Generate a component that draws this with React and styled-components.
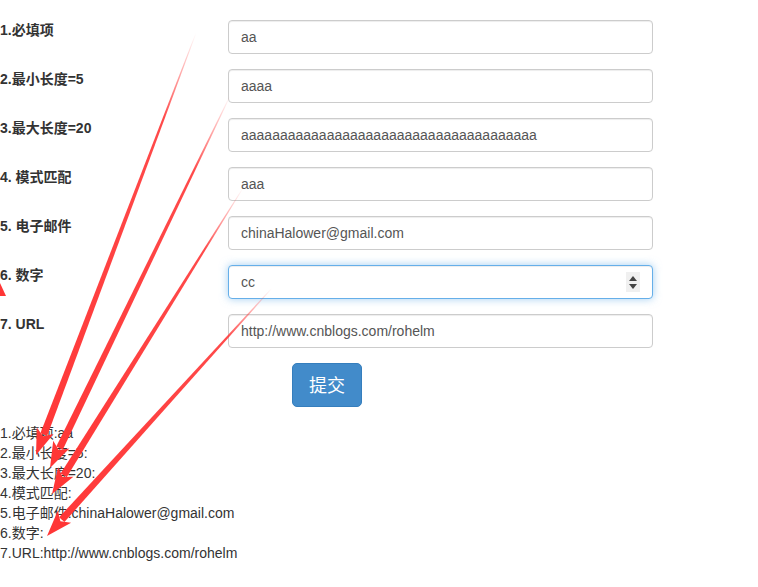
import React from 'react'
import styled, { createGlobalStyle } from 'styled-components'

const GlobalStyle = createGlobalStyle`
  body {
    margin: 0;
    background: #fff;
    font-family: "Liberation Sans", Arial, "Noto Sans CJK SC", sans-serif;
    font-size: 14px;
    color: #333;
  }
`

const Page = styled.div`
  position: relative;
  width: 758px;
  height: 587px;
  overflow: hidden;
  padding-top: 20px;
  box-sizing: border-box;
`

const Form = styled.form`
  display: flex;
  flex-direction: column;
`

const FormGroup = styled.div`
  display: flex;
  align-items: flex-start;
  margin-bottom: 15px;
`

const Label = styled.label`
  width: 228px;
  font-weight: bold;
  line-height: 20px;
  color: #333;
`

const InputWrap = styled.div`
  position: relative;
  width: 425px;
`

const Input = styled.input`
  box-sizing: border-box;
  width: 100%;
  height: 34px;
  padding: 6px 12px;
  font-family: inherit;
  font-size: 14px;
  line-height: 20px;
  color: #555;
  background: #fff;
  border: 1px solid ${({ $focused }) => ($focused ? '#66afe9' : '#ccc')};
  border-radius: 4px;
  outline: none;
  box-shadow: ${({ $focused }) =>
    $focused
      ? 'inset 0 1px 1px rgba(0,0,0,.075), 0 0 8px rgba(102,175,233,.6)'
      : 'inset 0 1px 1px rgba(0,0,0,.075)'};
`

const Spinner = styled.span`
  position: absolute;
  right: 13px;
  top: 7px;
  width: 14px;
  height: 20px;
  background: #f0f0f0;
  display: flex;
  flex-direction: column;
  align-items: center;
  justify-content: center;
  gap: 3px;
`

const Tri = styled.span`
  width: 0;
  height: 0;
  border-left: 4px solid transparent;
  border-right: 4px solid transparent;
  ${({ $up }) => ($up ? 'border-bottom: 5px solid #444;' : 'border-top: 5px solid #444;')}
`

const ButtonRow = styled.div`
  padding-left: 292px;
`

const SubmitButton = styled.button`
  box-sizing: border-box;
  height: 44px;
  padding: 10px 16px 8px;
  font-family: "Liberation Sans", "Noto Sans CJK SC", sans-serif;
  font-size: 18px;
  line-height: 24px;
  color: #fff;
  background: #428bca;
  border: 1px solid #357ebd;
  border-radius: 5px;
`

const Result = styled.div`
  margin-top: 16px;
  line-height: 20px;
  color: #333;
`

const Overlay = styled.svg`
  position: absolute;
  left: 0;
  top: 0;
  pointer-events: none;
`

const fields = [
  { label: '1.必填项', value: 'aa' },
  { label: '2.最小长度=5', value: 'aaaa' },
  { label: '3.最大长度=20', value: 'aaaaaaaaaaaaaaaaaaaaaaaaaaaaaaaaaaaaaa' },
  { label: '4. 模式匹配', value: 'aaa' },
  { label: '5. 电子邮件', value: 'chinaHalower@gmail.com' },
  { label: '6. 数字', value: 'cc', focused: true, spinner: true },
  { label: '7. URL', value: 'http://www.cnblogs.com/rohelm' },
]

const results = [
  '1.必填项:aa',
  '2.最小长度=5:',
  '3.最大长度=20:',
  '4.模式匹配:',
  '5.电子邮件:chinaHalower@gmail.com',
  '6.数字:',
  '7.URL:http://www.cnblogs.com/rohelm',
]

const arrows = [
  { x1: 196, y1: 33, x2: 36, y2: 455 },
  { x1: 230, y1: 96, x2: 50, y2: 468 },
  { x1: 243, y1: 188, x2: 52, y2: 494 },
  { x1: 272, y1: 288, x2: 47, y2: 536 },
]

function arrowShapes(a) {
  const dx = a.x2 - a.x1
  const dy = a.y2 - a.y1
  const len = Math.hypot(dx, dy)
  const ux = dx / len
  const uy = dy / len
  const nx = -uy
  const ny = ux
  const headLen = 26
  const headW = 9
  const bx = a.x2 - ux * headLen
  const by = a.y2 - uy * headLen
  const w0 = 0.4
  const w1 = 3.6
  const shaft = [
    [a.x1 + nx * w0, a.y1 + ny * w0],
    [bx + ux * 4 + nx * w1, by + uy * 4 + ny * w1],
    [bx + ux * 4 - nx * w1, by + uy * 4 - ny * w1],
    [a.x1 - nx * w0, a.y1 - ny * w0],
  ]
  const head = [
    [a.x2, a.y2],
    [bx + nx * headW, by + ny * headW],
    [bx + ux * 6, by + uy * 6],
    [bx - nx * headW, by - ny * headW],
  ]
  const pts = (p) => p.map(([x, y]) => `${x.toFixed(1)},${y.toFixed(1)}`).join(' ')
  return { shaft: pts(shaft), head: pts(head) }
}

const Arrows = () => (
  <Overlay width="758" height="587" viewBox="0 0 758 587">
    <defs>
      {arrows.map((a, i) => (
        <linearGradient
          key={i}
          id={`fade${i}`}
          gradientUnits="userSpaceOnUse"
          x1={a.x1}
          y1={a.y1}
          x2={a.x2}
          y2={a.y2}
        >
          <stop offset="0" stopColor="#ff3636" stopOpacity="0" />
          <stop offset="0.2" stopColor="#ff3636" stopOpacity="0.9" />
          <stop offset="1" stopColor="#ff3636" stopOpacity="1" />
        </linearGradient>
      ))}
    </defs>
    {arrows.map((a, i) => {
      const s = arrowShapes(a)
      return (
        <g key={i}>
          <polygon points={s.shaft} fill={`url(#fade${i})`} />
          <polygon points={s.head} fill="#ff3636" />
        </g>
      )
    })}
    <polygon points="0,283 6,296 0,296" fill="#ff3636" />
  </Overlay>
)

const App = () => (
  <Page>
    <GlobalStyle />
    <Form onSubmit={(e) => e.preventDefault()}>
      {fields.map((f) => (
        <FormGroup key={f.label}>
          <Label>{f.label}</Label>
          <InputWrap>
            <Input type="text" defaultValue={f.value} $focused={f.focused} />
            {f.spinner && (
              <Spinner>
                <Tri $up />
                <Tri />
              </Spinner>
            )}
          </InputWrap>
        </FormGroup>
      ))}
      <ButtonRow>
        <SubmitButton type="submit">提交</SubmitButton>
      </ButtonRow>
    </Form>
    <Result>
      {results.map((r) => (
        <div key={r}>{r}</div>
      ))}
    </Result>
    <Arrows />
  </Page>
)

export default App
